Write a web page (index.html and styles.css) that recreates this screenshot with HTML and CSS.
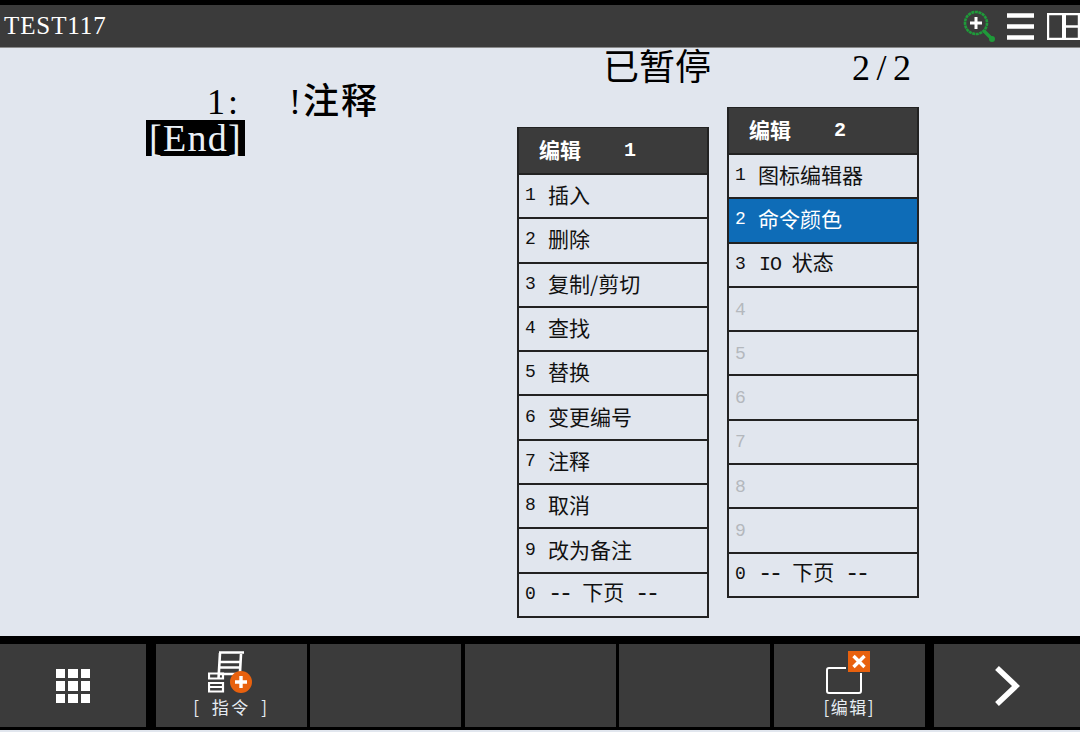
FILE: index.html
```html
<!DOCTYPE html>
<html lang="zh-CN">
<head>
<meta charset="utf-8">
<title>TEST117</title>
<link rel="stylesheet" href="styles.css">
</head>
<body>
<div class="screen">
  <header class="titlebar">
    <span class="title">TEST117</span>
    <div class="tools">
      <svg class="ico-zoom" width="36" height="36" viewBox="0 0 36 36"><circle cx="14" cy="14" r="11" fill="none" stroke="#1f9a3a" stroke-width="2.6" stroke-dasharray="3 .6"/><path d="M8 14h12M14 8v12" stroke="#fff" stroke-width="3"/><path d="M22 22l9 9" stroke="#1f9a3a" stroke-width="3.4"/><circle cx="30" cy="30" r="3" fill="#1f9a3a"/></svg>
      <svg class="ico-menu" width="27" height="27" viewBox="0 0 27 27"><path d="M0 2.5h27M0 13.5h27M0 24.5h27" stroke="#fff" stroke-width="4.4"/></svg>
      <svg class="ico-split" width="33" height="27" viewBox="0 0 33 27"><path d="M1 1h31v25H1zM19 13.500h13" fill="none" stroke="#fff" stroke-width="2.400"/><path d="M15 0h4v27h-4z" fill="#fff"/></svg>
    </div>
  </header>
  <main class="content">
    <section class="program">
      <div class="line"><span class="num">1:</span><span class="code">!注释</span></div>
      <div class="endline"><span class="end">[End]</span></div>
    </section>
    <section class="side">
      <div class="status"><span class="paused">已暂停</span><span class="page">2/2</span></div>
      <div class="menus">
        <div class="menu menu-low">
          <div class="menu-head"><span>编辑</span><span class="menu-no">1</span></div>
          <div class="row"><span class="n">1</span><span>插入</span></div>
          <div class="row"><span class="n">2</span><span>删除</span></div>
          <div class="row"><span class="n">3</span><span>复制/剪切</span></div>
          <div class="row"><span class="n">4</span><span>查找</span></div>
          <div class="row"><span class="n">5</span><span>替换</span></div>
          <div class="row"><span class="n">6</span><span>变更编号</span></div>
          <div class="row"><span class="n">7</span><span>注释</span></div>
          <div class="row"><span class="n">8</span><span>取消</span></div>
          <div class="row"><span class="n">9</span><span>改为备注</span></div>
          <div class="row"><span class="n">0</span><span><span class="dash dash-l">--</span> 下页 <span class="dash dash-r">--</span></span></div>
        </div>
        <div class="menu">
          <div class="menu-head"><span>编辑</span><span class="menu-no">2</span></div>
          <div class="row"><span class="n">1</span><span>图标编辑器</span></div>
          <div class="row active"><span class="n">2</span><span>命令颜色</span></div>
          <div class="row"><span class="n">3</span><span><span class="io">IO</span> 状态</span></div>
          <div class="row off"><span class="n">4</span></div>
          <div class="row off"><span class="n">5</span></div>
          <div class="row off"><span class="n">6</span></div>
          <div class="row off"><span class="n">7</span></div>
          <div class="row off"><span class="n">8</span></div>
          <div class="row off"><span class="n">9</span></div>
          <div class="row"><span class="n">0</span><span><span class="dash dash-l">--</span> 下页 <span class="dash dash-r">--</span></span></div>
        </div>
      </div>
    </section>
  </main>
  <footer class="softkeys">
    <div class="key key-first">
      <svg width="34" height="34" viewBox="0 0 34 34" fill="#fff"><path d="M0 0h9v9H0zM12 0h10v9H12zM25 0h9v9h-9zM0 12h9v10H0zM12 12h10v10H12zM25 12h9v10h-9zM0 25h9v9H0zM12 25h10v9H12zM25 25h9v9h-9z"/></svg>
    </div>
    <div class="key">
      <svg class="key-ico" width="46" height="46" viewBox="0 0 46 46"><path d="M11 1.500h25M10.500 28L12 2M11 11h21M11 16.500h21M10 23h22M33 3l-1 18" fill="none" stroke="#fff" stroke-width="2.600"/><path d="M1 22.500h14v5H1zM1 32h14v8.500H1zM1 36h14" fill="none" stroke="#fff" stroke-width="2.200"/><circle cx="33" cy="31" r="11" fill="#e8610e"/><path d="M27 31h12M33 25v12" stroke="#fff" stroke-width="3.400"/></svg>
      <span class="key-label wide">[ 指令 ]</span>
    </div>
    <div class="key"></div>
    <div class="key"></div>
    <div class="key"></div>
    <div class="key">
      <svg class="key-ico" width="46" height="46" viewBox="0 0 46 46"><path d="M20 17H3a2 2 0 0 0-2 2v21a2 2 0 0 0 2 2h30a2 2 0 0 0 2-2V22" fill="none" stroke="#fff" stroke-width="2"/><rect x="22" y="0" width="22" height="21" fill="#e8610e"/><path d="M27.500 5l11 11M38.500 5l-11 11" stroke="#fff" stroke-width="3.400"/></svg>
      <span class="key-label edit">[编辑]</span>
    </div>
    <div class="key key-last">
      <svg width="26" height="42" viewBox="0 0 26 42"><path d="M3 3l19 18L3 39" fill="none" stroke="#fff" stroke-width="5.500"/></svg>
    </div>
  </footer>
  <div class="base"></div>
</div>
</body>
</html>
```
FILE: styles.css
```css
* { box-sizing: border-box; }
html, body { margin: 0; padding: 0; }
body {
  width: 1080px;
  height: 732px;
  overflow: hidden;
  background: #e1e6ee;
  font-family: "Noto Sans CJK SC", sans-serif;
}
.screen { display: flex; flex-direction: column; height: 732px; }

.titlebar {
  flex: none;
  height: 48px;
  border-top: 5px solid #000;
  border-bottom: 1px solid #8a8a8a;
  background: #3b3b3b;
  display: flex;
  align-items: center;
  justify-content: space-between;
  padding-left: 4px;
}
.title {
  font-family: "Liberation Serif", serif;
  font-size: 25px;
  letter-spacing: 0.9px;
  color: #fff;
}
.tools { display: flex; align-items: center; }
.ico-zoom { margin-right: 9px; margin-top: 1px; }
.ico-menu { margin-right: 13px; }
.ico-split { margin-top: 1px; }

.content { flex: none; height: 588px; display: flex; justify-content: space-between; }
.program { padding: 37px 0 0 146px; font-family: "Liberation Serif", "Noto Sans CJK SC", serif; color: #000; }
.line { display: flex; font-size: 36px; line-height: 35px; height: 35px; padding-left: 61px; }
.num { width: 82px; letter-spacing: 3px; }
.code { white-space: nowrap; font-weight: 500; letter-spacing: 2px; }
.endline { display: flex; }
.end {
  display: block;
  background: #000;
  color: #eaf0f6;
  font-size: 38px;
  letter-spacing: 1.3px;
  line-height: 36px;
  height: 36px;
  width: 99px;
  text-align: center;
}

.side { width: 563px; padding-right: 161px; }
.status {
  font-family: "Liberation Serif", "Noto Sans CJK SC", serif;
  display: flex;
  height: 59px;
  padding-top: 1px;
  color: #000;
  font-size: 36px;
  line-height: 38px;
  margin-left: 86px;
}
.paused { width: 249px; }
.page { letter-spacing: 6.5px; white-space: nowrap; }

.menus { display: flex; align-items: flex-start; gap: 18px; width: 402px; }
.menu {
  width: 192px;
  height: 491px;
  border: 2px solid #222;
  border-top-width: 1px;
  display: flex;
  flex-direction: column;
  flex: none;
  background: #e1e6ee;
}
.menu-low { margin-top: 20px; }
.menu-head {
  flex: none;
  height: 45px;
  background: #3b3b3b;
  color: #fff;
  display: flex;
  align-items: center;
  padding: 0 0 4px 20px;
  font-size: 21px;
  font-weight: 700;
}
.menu-no { margin: 4px 0 0 43px; font-family: "Liberation Mono", monospace; font-size: 20px; }
.row {
  flex: 1;
  display: flex;
  align-items: center;
  border-top: 2px solid #222;
  font-size: 21px;
  line-height: 24px;
  color: #111;
  padding: 0 0 4px 6px;
  white-space: pre;
}
.n { width: 23px; flex: none; margin-top: 2px; font-family: "Liberation Mono", monospace; font-size: 18px; }
.dash { font-family: "Liberation Mono", monospace; font-size: 24px; letter-spacing: -3.6px; }
.dash-l { margin-right: 8px; }
.dash-r { margin-left: 6px; }
.io { font-family: "Liberation Mono", monospace; font-size: 20px; letter-spacing: -1px; margin: 0 6px 0 1px; }
.active { background: #0e6cb7; color: #fff; }
.off { color: #b4b8bd; }
.off .n { margin-top: 5px; }

.softkeys {
  flex: none;
  height: 94px;
  background: #000;
  border-top: 8px solid #000;
  border-bottom: 3px solid #000;
  display: flex;
  gap: 3.8px;
}
.key {
  width: 150.7px;
  background: #3b3b3b;
  display: flex;
  flex-direction: column;
  align-items: center;
  justify-content: center;
  color: #e6ecf2;
}
.key-first { width: 146px; margin-right: 6.2px; }
.key-last { flex: 1; margin-left: 5.5px; }
.key-ico { margin-top: 5px; }
.key-label { font-size: 17px; line-height: 17px; margin-top: 1px; margin-bottom: 11px; white-space: pre; }
.wide { letter-spacing: 2.5px; word-spacing: 4px; }
.edit { letter-spacing: 1.5px; }
.base { flex: 1; background: #e1e6ee; }
```
